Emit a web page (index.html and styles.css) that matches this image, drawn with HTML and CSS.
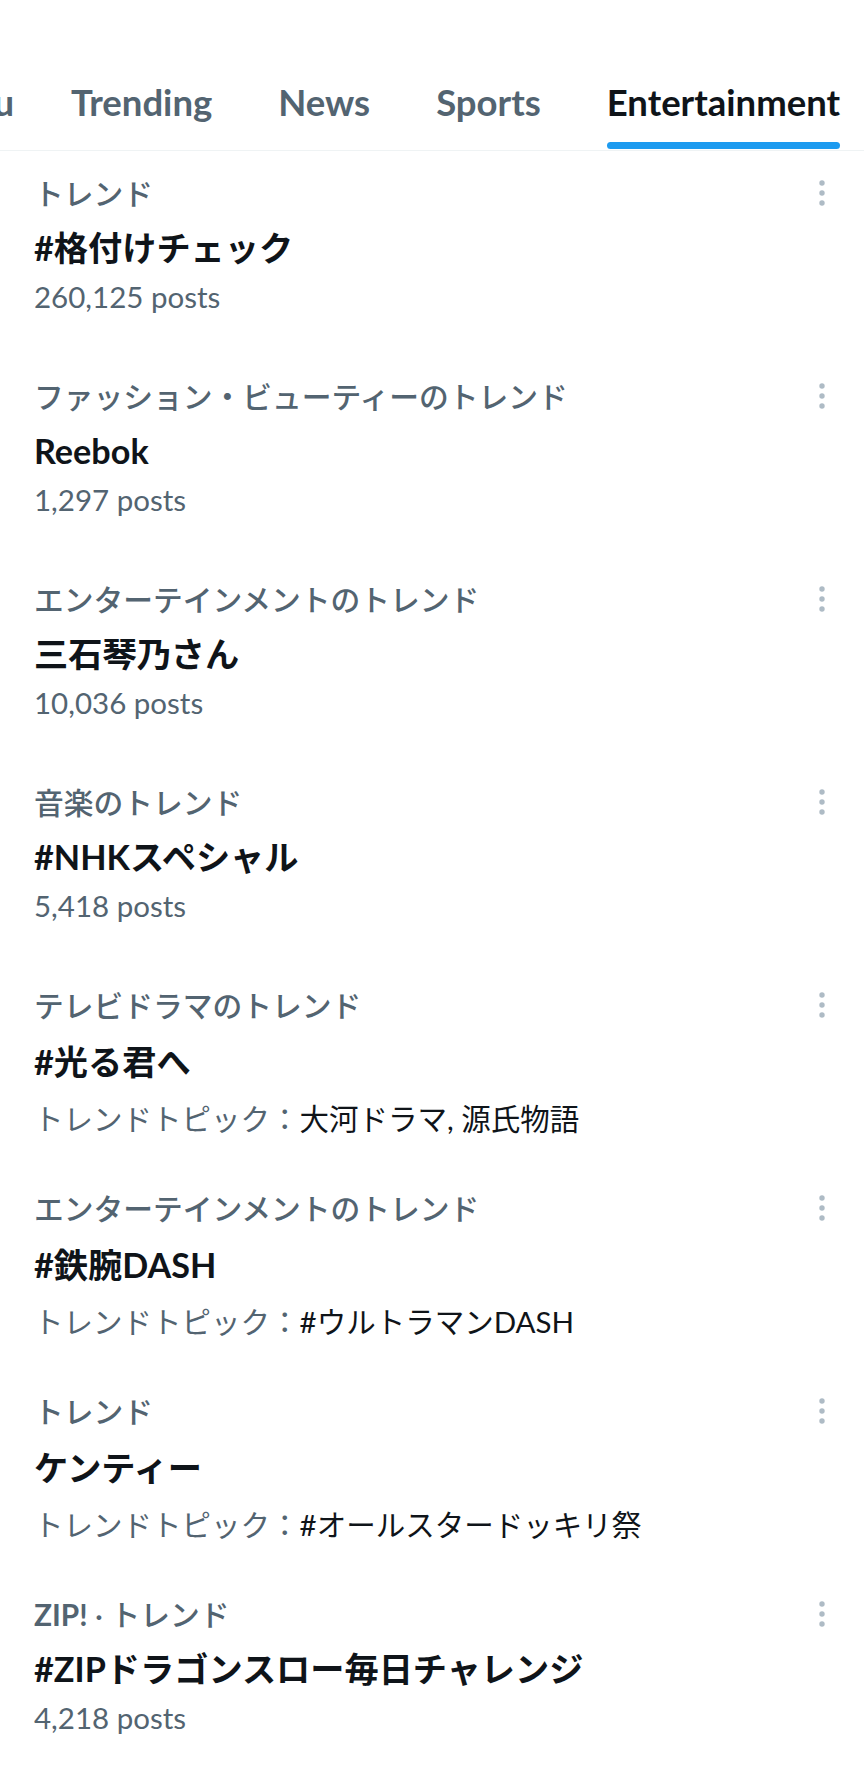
FILE: index.html
```html
<!DOCTYPE html>
<html lang="ja">
<head>
<meta charset="utf-8">
<title>Entertainment</title>
<link rel="stylesheet" href="styles.css">
</head>
<body>
<nav class="tabs">
  <div class="tabs-row">
    <div class="tab tab--first"><div class="tab-inner"><span class="tab-label">For you</span><span class="tab-bar"></span></div></div>
    <div class="tab"><div class="tab-inner"><span class="tab-label">Trending</span><span class="tab-bar"></span></div></div>
    <div class="tab"><div class="tab-inner"><span class="tab-label">News</span><span class="tab-bar"></span></div></div>
    <div class="tab"><div class="tab-inner"><span class="tab-label">Sports</span><span class="tab-bar"></span></div></div>
    <div class="tab tab--active"><div class="tab-inner"><span class="tab-label">Entertainment</span><span class="tab-bar"></span></div></div>
  </div>
</nav>

<section class="trends">
  <div class="trend">
    <div class="trend-body">
      <div class="trend-cat">トレンド</div>
      <div class="trend-title">#格付けチェック</div>
      <div class="trend-meta">260,125 posts</div>
    </div>
    <div class="trend-more"><svg viewBox="0 0 20 30" width="20" height="30"><circle cx="10" cy="5" r="2.7"/><circle cx="10" cy="15" r="2.7"/><circle cx="10" cy="25" r="2.7"/></svg></div>
  </div>

  <div class="trend">
    <div class="trend-body">
      <div class="trend-cat">ファッション・ビューティーのトレンド</div>
      <div class="trend-title">Reebok</div>
      <div class="trend-meta">1,297 posts</div>
    </div>
    <div class="trend-more"><svg viewBox="0 0 20 30" width="20" height="30"><circle cx="10" cy="5" r="2.7"/><circle cx="10" cy="15" r="2.7"/><circle cx="10" cy="25" r="2.7"/></svg></div>
  </div>

  <div class="trend">
    <div class="trend-body">
      <div class="trend-cat">エンターテインメントのトレンド</div>
      <div class="trend-title">三石琴乃さん</div>
      <div class="trend-meta">10,036 posts</div>
    </div>
    <div class="trend-more"><svg viewBox="0 0 20 30" width="20" height="30"><circle cx="10" cy="5" r="2.7"/><circle cx="10" cy="15" r="2.7"/><circle cx="10" cy="25" r="2.7"/></svg></div>
  </div>

  <div class="trend">
    <div class="trend-body">
      <div class="trend-cat">音楽のトレンド</div>
      <div class="trend-title">#NHKスペシャル</div>
      <div class="trend-meta">5,418 posts</div>
    </div>
    <div class="trend-more"><svg viewBox="0 0 20 30" width="20" height="30"><circle cx="10" cy="5" r="2.7"/><circle cx="10" cy="15" r="2.7"/><circle cx="10" cy="25" r="2.7"/></svg></div>
  </div>

  <div class="trend trend--topic">
    <div class="trend-body">
      <div class="trend-cat">テレビドラマのトレンド</div>
      <div class="trend-title">#光る君へ</div>
      <div class="trend-meta"><span class="topic-label">トレンドトピック：</span><span class="topic-values">大河ドラマ, 源氏物語</span></div>
    </div>
    <div class="trend-more"><svg viewBox="0 0 20 30" width="20" height="30"><circle cx="10" cy="5" r="2.7"/><circle cx="10" cy="15" r="2.7"/><circle cx="10" cy="25" r="2.7"/></svg></div>
  </div>

  <div class="trend trend--topic">
    <div class="trend-body">
      <div class="trend-cat">エンターテインメントのトレンド</div>
      <div class="trend-title">#鉄腕DASH</div>
      <div class="trend-meta"><span class="topic-label">トレンドトピック：</span><span class="topic-values">#ウルトラマンDASH</span></div>
    </div>
    <div class="trend-more"><svg viewBox="0 0 20 30" width="20" height="30"><circle cx="10" cy="5" r="2.7"/><circle cx="10" cy="15" r="2.7"/><circle cx="10" cy="25" r="2.7"/></svg></div>
  </div>

  <div class="trend trend--topic">
    <div class="trend-body">
      <div class="trend-cat">トレンド</div>
      <div class="trend-title">ケンティー</div>
      <div class="trend-meta"><span class="topic-label">トレンドトピック：</span><span class="topic-values">#オールスタードッキリ祭</span></div>
    </div>
    <div class="trend-more"><svg viewBox="0 0 20 30" width="20" height="30"><circle cx="10" cy="5" r="2.7"/><circle cx="10" cy="15" r="2.7"/><circle cx="10" cy="25" r="2.7"/></svg></div>
  </div>

  <div class="trend">
    <div class="trend-body">
      <div class="trend-cat"><span class="cat-strong">ZIP!</span> · トレンド</div>
      <div class="trend-title">#ZIPドラゴンスロー毎日チャレンジ</div>
      <div class="trend-meta">4,218 posts</div>
    </div>
    <div class="trend-more"><svg viewBox="0 0 20 30" width="20" height="30"><circle cx="10" cy="5" r="2.7"/><circle cx="10" cy="15" r="2.7"/><circle cx="10" cy="25" r="2.7"/></svg></div>
  </div>
</section>
</body>
</html>
```

FILE: styles.css
```css
* { box-sizing: border-box; }

html, body {
  margin: 0;
  padding: 0;
  background: #ffffff;
}

body {
  width: 864px;
  overflow: hidden;
  font-family: Lato, "Noto Sans CJK JP", sans-serif;
  color: #0f1419;
}

/* ---------- Tabs ---------- */
.tabs {
  height: 151px;
  border-bottom: 1px solid #eff3f4;
  overflow: hidden;
}

.tabs-row {
  display: flex;
  height: 100%;
  margin-left: -140px;
}

.tab {
  flex: none;
  display: flex;
  align-items: flex-end;
  padding: 0 33px;
  font-size: 36.5px;
  font-weight: 700;
  color: #536471;
}

.tab--first {
  padding-right: 24px;
}

.tab--active {
  color: #0f1419;
}

.tab-inner {
  display: flex;
  flex-direction: column;
}

.tab-label {
  line-height: 45px;
  white-space: nowrap;
}

.tab-bar {
  height: 7px;
  margin: 17px 0 1px;
  border-radius: 4px;
  background: transparent;
}

.tab--active .tab-bar {
  background: #1d9bf0;
}

/* ---------- Trends ---------- */
.trend {
  display: flex;
  align-items: flex-start;
  padding: 25px 32px 39px 34px;
}

.trend--topic {
  padding-bottom: 29.5px;
}

.trend-body {
  flex: 1;
  min-width: 0;
}

.trend-cat {
  font-size: 29.75px;
  line-height: 36px;
  font-weight: 500;
  color: #536471;
  white-space: nowrap;
}

.cat-strong {
  font-weight: 700;
}

.trend-title {
  margin-top: 12.5px;
  font-size: 34.2px;
  line-height: 45px;
  font-weight: 700;
  color: #0f1419;
  white-space: nowrap;
}

.trend--topic .trend-title {
  margin-top: 14.5px;
}

.trend-meta {
  margin-top: 9.5px;
  font-size: 29.5px;
  line-height: 36px;
  color: #536471;
  white-space: nowrap;
}

.trend--topic .trend-meta {
  margin-top: 17px;
}

.topic-values {
  color: #0f1419;
}

.trend-more {
  flex: none;
  width: 20px;
  height: 30px;
  margin: 2px 0 0 16px;
}

.trend-more svg {
  display: block;
  fill: #aebbc5;
}
```
